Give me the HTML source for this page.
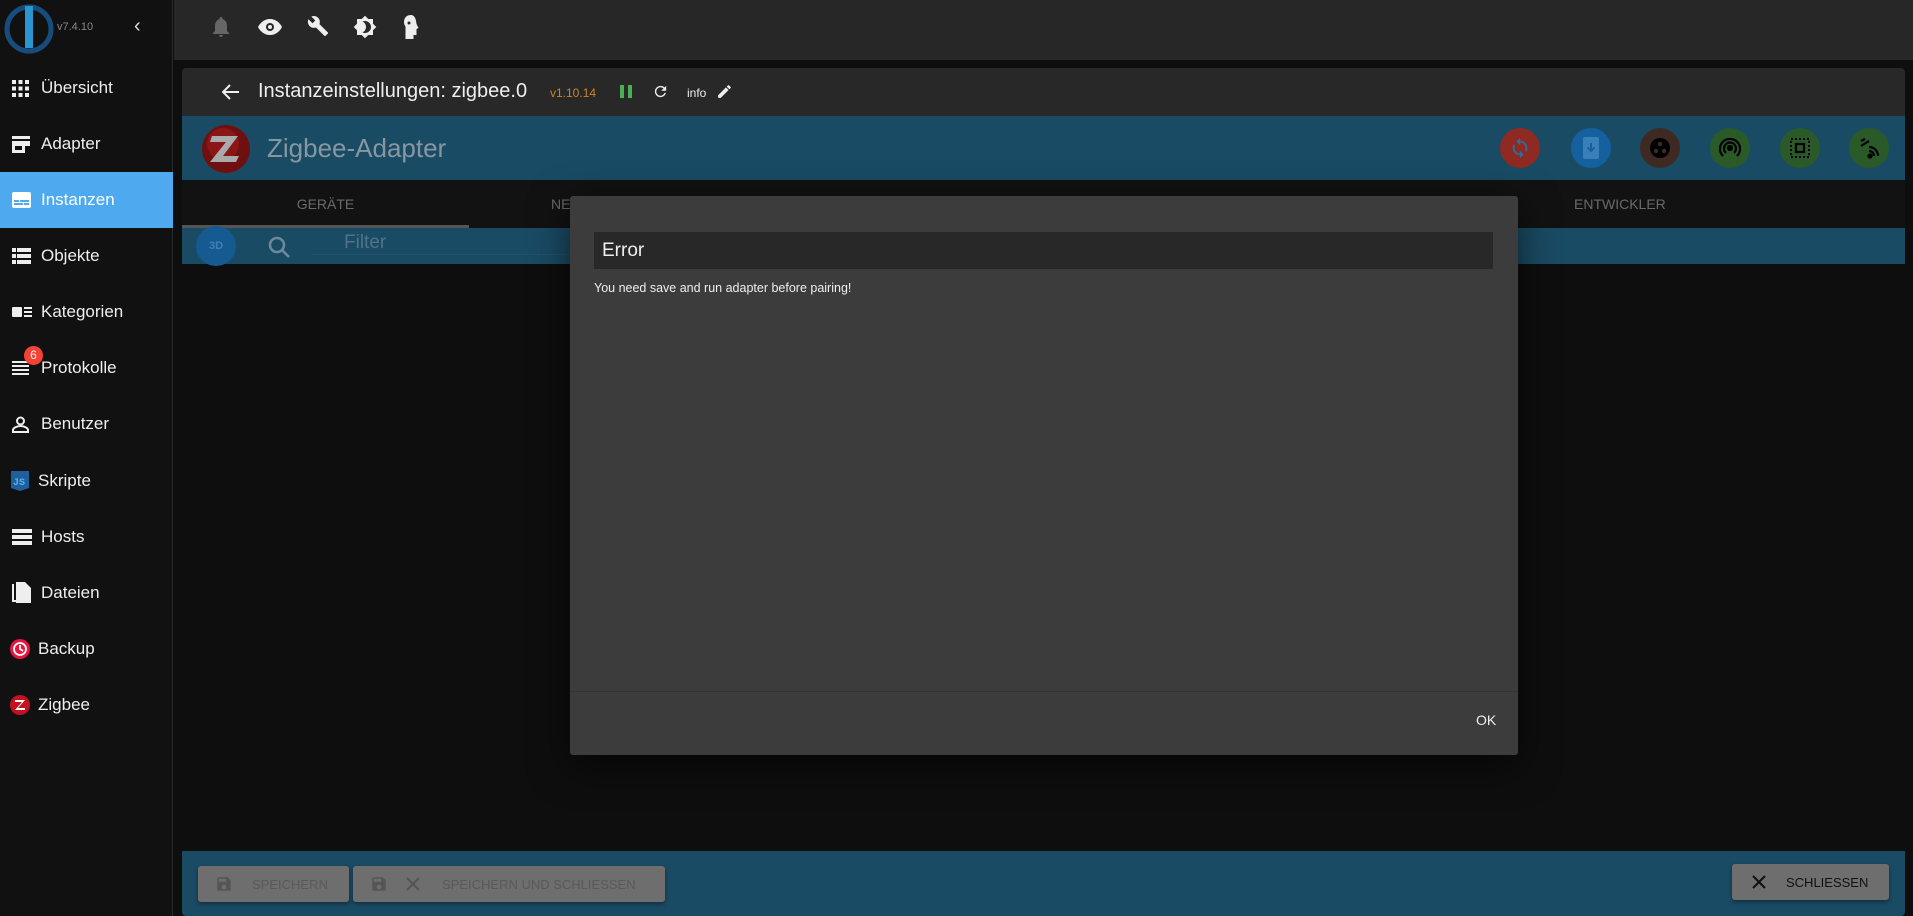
<!DOCTYPE html>
<html><head><meta charset="utf-8"><style>
*{box-sizing:border-box;margin:0;padding:0}
body{width:1913px;height:916px;overflow:hidden;background:#0e0e0e;font-family:"Liberation Sans",sans-serif;position:relative;color:#fff}
.abs{position:absolute}
#side{left:0;top:0;width:173px;height:916px;background:#111;border-right:1px solid #2a2a2a}
.item{position:absolute;left:0;width:173px;height:56px;display:flex;align-items:center;font-size:17px;color:#eee}
.item svg{position:absolute;left:12px}
.item span{position:absolute;left:41px}
#top{left:174px;top:0;width:1739px;height:60px;background:#272727}
.btn{position:absolute;background:#6e6e6e;border-radius:3px;color:#595959;font-size:13px;display:flex;align-items:center;box-shadow:0 2px 4px rgba(0,0,0,.4)}
</style></head><body>
<div id="side" class="abs">
 <svg class="abs" style="left:3px;top:3px" width="52" height="52" viewBox="0 0 52 52"><circle cx="26" cy="26" r="22" fill="none" stroke="#174d7c" stroke-width="5"/><rect x="22" y="3" width="8" height="42" fill="#2a95d0"/><circle cx="26" cy="7" r="4" fill="#2a95d0"/></svg>
 <div class="abs" style="left:57px;top:21px;font-size:11px;color:#888">v7.4.10</div>
 <div class="abs" style="left:134px;top:15px;font-size:20px;color:#ddd">‹</div>
 <div class="item" style="top:60px"><svg width="17" height="17" viewBox="0 0 17 17" fill="#eee"><rect x="0" y="0" width="4" height="4"/><rect x="6.5" y="0" width="4" height="4"/><rect x="13" y="0" width="4" height="4"/><rect x="0" y="6.5" width="4" height="4"/><rect x="6.5" y="6.5" width="4" height="4"/><rect x="13" y="6.5" width="4" height="4"/><rect x="0" y="13" width="4" height="4"/><rect x="6.5" y="13" width="4" height="4"/><rect x="13" y="13" width="4" height="4"/></svg><span>Übersicht</span></div>
 <div class="item" style="top:116px"><svg width="18" height="17" viewBox="0 0 18 17" fill="#eee"><rect x="0" y="0" width="18" height="3"/><rect x="0" y="5" width="18" height="5"/><rect x="0" y="10" width="3" height="7"/><rect x="3" y="14" width="7" height="3"/><rect x="10" y="10" width="3" height="7"/></svg><span>Adapter</span></div>
 <div class="item" style="top:172px;background:#4ea9ef"><svg width="19" height="16" viewBox="0 0 19 16"><rect width="19" height="16" rx="2" fill="#fff"/><rect x="2" y="8" width="5" height="2" fill="#4ea9ef"/><rect x="8" y="8" width="9" height="2" fill="#4ea9ef"/><rect x="2" y="11" width="9" height="2" fill="#4ea9ef"/><rect x="12" y="11" width="5" height="2" fill="#4ea9ef"/></svg><span style="color:#fff">Instanzen</span></div>
 <div class="item" style="top:228px"><svg width="19" height="16" viewBox="0 0 19 16" fill="#eee"><rect x="0" y="0" width="4" height="4"/><rect x="5" y="0" width="14" height="4"/><rect x="0" y="6" width="4" height="4"/><rect x="5" y="6" width="14" height="4"/><rect x="0" y="12" width="4" height="4"/><rect x="5" y="12" width="14" height="4"/></svg><span>Objekte</span></div>
 <div class="item" style="top:284px"><svg width="20" height="12" viewBox="0 0 20 12" fill="#eee"><rect x="0" y="1" width="10" height="10" rx="1"/><rect x="12" y="1" width="8" height="2"/><rect x="12" y="5" width="8" height="2"/><rect x="12" y="9" width="8" height="2"/></svg><span>Kategorien</span></div>
 <div class="item" style="top:340px"><svg width="17" height="14" viewBox="0 0 17 14" fill="#eee"><rect y="0" width="17" height="2"/><rect y="4" width="17" height="2"/><rect y="8" width="17" height="2"/><rect y="12" width="17" height="2"/></svg><span>Protokolle</span><div class="abs" style="left:24px;top:6px;width:19px;height:19px;border-radius:50%;background:#f44336;font-size:12px;text-align:center;line-height:19px">6</div></div>
 <div class="item" style="top:396px"><svg width="17" height="17" viewBox="0 0 17 17" fill="none" stroke="#eee" stroke-width="2"><circle cx="8.5" cy="5" r="3.5"/><path d="M1 16v-2c0-2 4-4 7.5-4s7.5 2 7.5 4v2z"/></svg><span>Benutzer</span></div>
 <div class="item" style="top:453px"><svg width="18" height="20" viewBox="0 0 18 20" style="left:11px"><path d="M0 0h18v17l-9 3-9-3z" fill="#1e5f9c"/><text x="2" y="14" font-size="10" fill="#5ab0ee" font-family="Liberation Mono" font-weight="bold">JS</text></svg><span style="left:38px">Skripte</span></div>
 <div class="item" style="top:509px"><svg width="20" height="16" viewBox="0 0 20 16" fill="#eee"><rect y="0" width="20" height="4"/><rect y="6" width="20" height="4"/><rect y="12" width="20" height="4"/></svg><span>Hosts</span></div>
 <div class="item" style="top:565px"><svg width="19" height="22" viewBox="0 0 19 22" fill="#eee"><path d="M0 2h2v16h11v2H0z"/><path d="M4 0h9l6 6v15H4z"/></svg><span>Dateien</span></div>
 <div class="item" style="top:621px"><svg width="20" height="20" viewBox="0 0 20 20" style="left:10px"><circle cx="10" cy="10" r="10" fill="#e8163f"/><circle cx="10" cy="10" r="6" fill="none" stroke="#fff" stroke-width="1.8"/><path d="M10 6v4l3 2" stroke="#fff" stroke-width="1.8" fill="none"/></svg><span style="left:38px">Backup</span></div>
 <div class="item" style="top:677px"><svg width="20" height="20" viewBox="0 0 20 20" style="left:10px"><circle cx="10" cy="10" r="10" fill="#c1121f"/><path d="M5 5h10l-7 8h7v2H5l7-8H5z" fill="#fff"/></svg><span style="left:38px">Zigbee</span></div>
</div>
<div id="top" class="abs">
 <svg class="abs" style="left:38px;top:17px" width="18" height="20" viewBox="0 0 18 20" fill="#666"><path d="M9 0c1 0 1.5.7 1.5 1.5v.6C13.5 3 15 5.5 15 9v5l2 2v1H1v-1l2-2V9c0-3.5 1.5-6 4.5-6.9v-.6C7.5.7 8 0 9 0zM7 18h4c0 1-1 2-2 2s-2-1-2-2z"/></svg>
 <svg class="abs" style="left:84px;top:19px" width="24" height="16" viewBox="0 0 24 16"><path d="M12 0C6 0 2 4 0 8c2 4 6 8 12 8s10-4 12-8C22 4 18 0 12 0z" fill="#eee"/><circle cx="12" cy="8" r="4" fill="#272727"/><circle cx="12" cy="8" r="2" fill="#eee"/></svg>
 <svg class="abs" style="left:133px;top:15px" width="22" height="22" viewBox="0 0 24 24" fill="#eee"><path d="M22.7 19l-9.1-9.1c.9-2.3.4-5-1.5-6.9-2-2-5-2.4-7.4-1.3L9 6 6 9 1.6 4.7C.4 7.1.9 10.1 2.9 12.1c1.9 1.9 4.6 2.4 6.9 1.5l9.1 9.1c.4.4 1 .4 1.4 0l2.3-2.3c.5-.4.5-1.1.1-1.4z"/></svg>
 <svg class="abs" style="left:179px;top:15px" width="24" height="24" viewBox="0 0 24 24" fill="#eee"><path d="M20 8.69V4h-4.69L12 .69 8.69 4H4v4.69L.69 12 4 15.31V20h4.69L12 23.31 15.31 20H20v-4.69L23.31 12 20 8.69zM12 18c-.89 0-1.74-.2-2.5-.55C11.56 16.5 13 14.42 13 12s-1.44-4.5-3.5-5.45C10.26 6.2 11.11 6 12 6c3.31 0 6 2.69 6 6s-2.69 6-6 6z"/></svg>
 <svg class="abs" style="left:229px;top:15px" width="16" height="24" viewBox="0 0 16 24" fill="#eee"><path d="M8 0C3.5 0 1 3 1 7c0 2 .5 3 1.5 4.5V24h8v-4h3v-6l2-1-2-4C13 3 11 0 8 0z"/><circle cx="6" cy="8" r="1.5" fill="#272727"/></svg>
</div>
<!-- panel header -->
<div class="abs" style="left:182px;top:68px;width:1723px;height:48px;background:#282828;border-radius:4px 4px 0 0"></div>
<svg class="abs" style="left:222px;top:84px" width="18" height="16" viewBox="0 0 18 16" fill="none" stroke="#eee" stroke-width="2"><path d="M17 8H2M8 1 1 8l7 7"/></svg>
<div class="abs" style="left:258px;top:80px;font-size:20px;color:#eee">Instanzeinstellungen: zigbee.0</div>
<div class="abs" style="left:550px;top:86px;font-size:12px;color:#c98426">v1.10.14</div>
<div class="abs" style="left:620px;top:85px;width:4px;height:13px;background:#4caf50"></div>
<div class="abs" style="left:628px;top:85px;width:4px;height:13px;background:#4caf50"></div>
<svg class="abs" style="left:652px;top:83px" width="17" height="17" viewBox="0 0 24 24" fill="#eee"><path d="M17.65 6.35A7.96 7.96 0 0 0 12 4a8 8 0 1 0 7.73 10h-2.08A6 6 0 1 1 12 6c1.66 0 3.14.69 4.22 1.78L13 11h7V4l-2.35 2.35z"/></svg>
<div class="abs" style="left:687px;top:86px;font-size:12px;color:#eee">info</div>
<svg class="abs" style="left:716px;top:83px" width="17" height="17" viewBox="0 0 24 24" fill="#eee"><path d="M3 17.25V21h3.75L17.81 9.94l-3.75-3.75L3 17.25zM20.71 7.04a1 1 0 0 0 0-1.41l-2.34-2.34a1 1 0 0 0-1.41 0l-1.83 1.83 3.75 3.75 1.83-1.83z"/></svg>
<!-- banner -->
<div class="abs" style="left:182px;top:116px;width:1723px;height:64px;background:#1a4b64"></div>
<svg class="abs" style="left:201px;top:124px" width="50" height="50" viewBox="0 0 50 50"><circle cx="25" cy="25" r="24" fill="#6e1010"/><circle cx="22" cy="20" r="16" fill="#8a1616"/><path d="M11 12h26l-15 20h16l-3 6H9l16-20H9z" fill="#aaa"/></svg>
<div class="abs" style="left:267px;top:133px;font-size:26px;color:#8797a0">Zigbee-Adapter</div>
<div class="abs" style="left:1500px;top:128px;width:40px;height:40px;border-radius:50%;background:#8e2a22"></div>
<svg class="abs" style="left:1509px;top:137px" width="22" height="22" viewBox="0 0 24 24" fill="#2a6ea0"><path d="M12 4V1L8 5l4 4V6c3.31 0 6 2.69 6 6 0 1.01-.25 1.97-.7 2.8l1.46 1.46A7.93 7.93 0 0 0 20 12c0-4.42-3.58-8-8-8zm0 14c-3.31 0-6-2.69-6-6 0-1.01.25-1.97.7-2.8L5.24 7.74A7.93 7.93 0 0 0 4 12c0 4.42 3.58 8 8 8v3l4-4-4-4v3z"/></svg>
<div class="abs" style="left:1571px;top:128px;width:40px;height:40px;border-radius:50%;background:#15609e"></div>
<svg class="abs" style="left:1583px;top:137px" width="16" height="22" viewBox="0 0 16 22"><rect width="16" height="22" rx="2" fill="#3a80b8"/><path d="M8 6v8M4.5 10.5 8 14l3.5-3.5" stroke="#15609e" stroke-width="2" fill="none"/></svg>
<div class="abs" style="left:1640px;top:128px;width:40px;height:40px;border-radius:50%;background:#3e2a22"></div>
<svg class="abs" style="left:1649px;top:137px" width="22" height="22" viewBox="0 0 22 22"><circle cx="11" cy="11" r="10" fill="#000"/><circle cx="11" cy="7" r="2.2" fill="#3e2a22"/><circle cx="7" cy="14" r="2.2" fill="#3e2a22"/><circle cx="15" cy="14" r="2.2" fill="#3e2a22"/></svg>
<div class="abs" style="left:1710px;top:128px;width:40px;height:40px;border-radius:50%;background:#2a5a28"></div>
<svg class="abs" style="left:1719px;top:137px" width="22" height="22" viewBox="0 0 22 22" fill="none" stroke="#000" stroke-width="2.2"><circle cx="11" cy="11" r="2" fill="#000"/><path d="M7 16a6 6 0 1 1 8 0M4 19a10 10 0 1 1 14 0"/></svg>
<div class="abs" style="left:1780px;top:128px;width:40px;height:40px;border-radius:50%;background:#2a5a28"></div>
<svg class="abs" style="left:1790px;top:138px" width="20" height="20" viewBox="0 0 20 20"><rect x="1" y="1" width="18" height="18" fill="none" stroke="#000" stroke-width="2" stroke-dasharray="2 2"/><rect x="6" y="6" width="8" height="8" fill="none" stroke="#000" stroke-width="2.2"/></svg>
<div class="abs" style="left:1849px;top:128px;width:40px;height:40px;border-radius:50%;background:#2a5a28"></div>
<svg class="abs" style="left:1858px;top:137px" width="22" height="22" viewBox="0 0 22 22" fill="none" stroke="#000" stroke-width="2.2"><path d="M3 4l4-2M3 9l8-5M20 19a9 9 0 0 0-9-9M16 19a5 5 0 0 0-5-5"/><circle cx="12" cy="19" r="1.5" fill="#000"/></svg>
<!-- tabs -->
<div class="abs" style="left:182px;top:180px;width:1723px;height:48px;background:#121212"></div>
<div class="abs" style="left:182px;top:180px;width:287px;height:48px;text-align:center;line-height:48px;font-size:14px;color:#6a6a6a">GERÄTE</div>
<div class="abs" style="left:182px;top:225px;width:287px;height:3px;background:#555"></div>
<div class="abs" style="left:551px;top:196px;font-size:14px;color:#6a6a6a">NE</div>
<div class="abs" style="left:1574px;top:196px;font-size:14px;color:#6a6a6a">ENTWICKLER</div>
<!-- filter -->
<div class="abs" style="left:182px;top:228px;width:1723px;height:36px;background:#1a4b64"></div>
<div class="abs" style="left:196px;top:226px;width:40px;height:40px;border-radius:50%;background:#165a92;color:#3f7fb5;font-size:11px;text-align:center;line-height:40px;font-weight:bold">3D</div>
<svg class="abs" style="left:267px;top:235px" width="24" height="24" viewBox="0 0 24 24" fill="none" stroke="#6c8a9b" stroke-width="2.5"><circle cx="10" cy="10" r="7"/><path d="M15 15l7 7"/></svg>
<div class="abs" style="left:344px;top:232px;font-size:19px;color:#4f7389">Filter</div>
<div class="abs" style="left:313px;top:254px;width:257px;border-bottom:1px dotted #2d5870"></div>
<!-- bottom -->
<div class="abs" style="left:182px;top:851px;width:1723px;height:65px;background:#1a4b64;border-radius:0 0 4px 4px"></div>
<div class="btn" style="left:198px;top:866px;width:151px;height:36px"><svg style="margin-left:17px" width="18" height="18" viewBox="0 0 24 24" fill="#555"><path d="M17 3H5a2 2 0 0 0-2 2v14a2 2 0 0 0 2 2h14a2 2 0 0 0 2-2V7l-4-4zm-5 16a3 3 0 1 1 0-6 3 3 0 0 1 0 6zm3-10H5V5h10v4z"/></svg><span style="margin-left:19px">SPEICHERN</span></div>
<div class="btn" style="left:353px;top:866px;width:312px;height:36px"><svg style="margin-left:17px" width="18" height="18" viewBox="0 0 24 24" fill="#555"><path d="M17 3H5a2 2 0 0 0-2 2v14a2 2 0 0 0 2 2h14a2 2 0 0 0 2-2V7l-4-4zm-5 16a3 3 0 1 1 0-6 3 3 0 0 1 0 6zm3-10H5V5h10v4z"/></svg><svg style="margin-left:18px" width="14" height="14" viewBox="0 0 14 14" stroke="#555" stroke-width="2"><path d="M1 1l12 12M13 1 1 13"/></svg><span style="margin-left:22px">SPEICHERN UND SCHLIESSEN</span></div>
<div class="btn" style="left:1732px;top:864px;width:157px;height:36px;color:#111"><svg style="margin-left:20px" width="14" height="14" viewBox="0 0 14 14" stroke="#111" stroke-width="2"><path d="M1 1l12 12M13 1 1 13"/></svg><span style="margin-left:20px">SCHLIESSEN</span></div>
<!-- dialog -->
<div class="abs" style="left:570px;top:196px;width:948px;height:559px;background:#3c3c3c;border-radius:3px;box-shadow:0 10px 40px rgba(0,0,0,.6)">
 <div class="abs" style="left:24px;top:36px;width:899px;height:37px;background:#282828;font-size:19px;line-height:37px;padding-left:8px;color:#eee">Error</div>
 <div class="abs" style="left:24px;top:85px;font-size:12.5px;color:#eee">You need save and run adapter before pairing!</div>
 <div class="abs" style="left:0;top:495px;width:948px;height:1px;background:#333"></div>
 <div class="abs" style="left:906px;top:516px;font-size:14px;color:#eee">OK</div>
</div>
</body></html>
